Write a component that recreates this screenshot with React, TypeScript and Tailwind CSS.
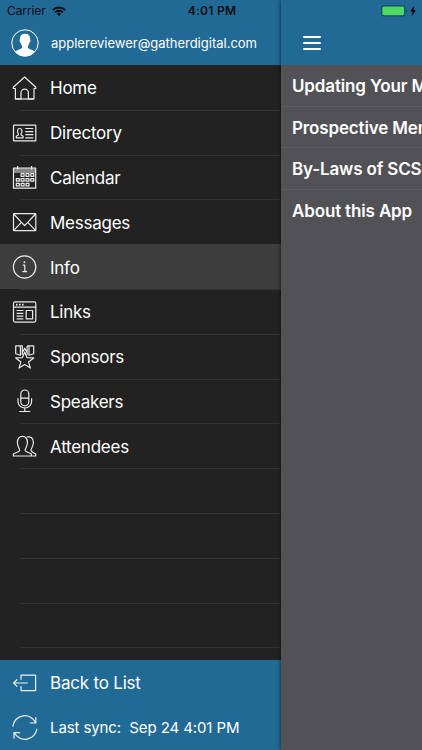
import React from "react";

const icons: Record<string, React.ReactNode> = {
  home: (
    <>
      <path d="M3.3 14.5V13.2L14.6 3l11.2 10.2v1.3H24V25h-5.6v-6.2a3.7 3.7 0 0 0-7.4 0V25H5.4V14.5Z" />
      <path d="M5.4 25H24" />
    </>
  ),
  directory: (
    <>
      <rect x="3.5" y="6.2" width="22.3" height="15.6" rx="0.6" />
      <path d="M6.3 18.8v-1.5l2-1.2v-1.4c-1.6-2.2-.8-5.2 1.4-5.2s3 3 1.4 5.2v1.4l2 1.2v1.5ZM15.3 9.5h8M15.3 12.6h8M15.3 15.7h8M15.3 18.8h8" />
    </>
  ),
  calendar: (
    <>
      <path d="M3.5 5.2h22.2v20H3.5ZM3.5 9h22.2M3.5 7h22.2" />
      <path d="M7.6 3v3.5M21.6 3v3.5" />
      <path
        strokeWidth="1.2"
        d="M11.1 10.7h3v2.6h-3ZM16 10.7h3v2.6h-3ZM20.8 10.7h3v2.6h-3ZM6.3 15.6h3v2.6h-3ZM11.1 15.6h3v2.6h-3ZM16 15.6h3v2.6h-3ZM20.8 15.6h3v2.6h-3ZM6.3 20.3h3v2.6h-3ZM11.1 20.3h3v2.6h-3ZM16 20.3h3v2.6h-3Z"
      />
    </>
  ),
  messages: (
    <>
      <rect x="3.5" y="5.6" width="22.3" height="17" rx="0.6" />
      <path d="m3.8 6 7.6 8.3L14.6 17.5l3.2-3.2L25.5 6M3.8 22.3l7.6-8M25.5 22.3l-7.7-8" />
    </>
  ),
  info: (
    <>
      <circle cx="14.6" cy="14" r="11.2" />
      <path d="M12.8 12.2h2v6.4M12.5 18.6h4.6" />
      <circle cx="14.4" cy="9.2" r="0.9" fill="currentColor" stroke="none" />
    </>
  ),
  links: (
    <>
      <rect x="3.5" y="3.9" width="22.3" height="20.2" rx="1.5" />
      <path d="M3.5 9.2h22.3M6.6 12.5h6.8M6.6 15.3h6.8M6.6 18.1h6.8M6.6 20.9h6.8M16.2 12.5h6.4v8.4h-6.4Z" />
      <path strokeWidth="1.6" d="M6 6.6h1.6M9 6.6h1.6M12 6.6h1.6" />
    </>
  ),
  sponsors: (
    <>
      <path d="m14.7 9 2.3 5.6 6.7.3-5.2 4 1.9 6.2-5.7-3.5L9 25.1l1.9-6.2-5.2-4 6.7-.3Z" />
      <path d="M5.7 2.9h4.7v9.3l-4.7-1.5ZM19 2.9h4.7v7.8L19 12.2ZM10.4 2.9h1.9v9M17.1 2.9H19M17.1 2.9v9M12.3 9.6l2.4-4.4 2.4 4.4" />
    </>
  ),
  speakers: (
    <>
      <rect x="10.8" y="3" width="8" height="15.8" rx="4" />
      <path d="M10.8 11.2h8M8 11.3v3.3a6.8 6.4 0 0 0 13.6 0v-3.3M14.8 21v3.5M9.3 24.5h11" />
    </>
  ),
  attendees: (
    <>
      <path d="M3.4 24v-2.1c2.6-1.6 6.3-1.8 6.3-3.6 0-2.1-2.3-3-2.3-7.7 0-4.2 2-6.2 5-6.2s5 2 5 6.2c0 4.7-2.3 5.6-2.3 7.7 0 1.8 3.7 2 6.3 3.6V24Z" />
      <path d="M16.8 5c4-.9 6.6 1.2 6.6 5.6s-2.4 5.5-2.4 7.7c0 1.8 2.3 2 4.8 3.6V24h-4.2" />
    </>
  ),
  back: (
    <path d="M11 10.7V6.2h14.6v15.4H11v-4.5M17.8 14H3.6M7.3 10.3 3.6 14l3.7 3.7" />
  ),
  sync: (
    <>
      <path d="M2.8 12.6A12 12 0 0 1 25.8 9M26.9 14.8A12 12 0 0 1 4.2 18.6" />
      <path d="M25.8 3.2V9h-6M4 24.8v-6.2h6.2" />
    </>
  ),
};

const Icon: React.FC<{ name: string }> = ({ name }) => (
  <svg
    viewBox="0 0 28 28"
    className="h-7 w-7 shrink-0 overflow-visible text-white/90"
    fill="none"
    stroke="currentColor"
    strokeWidth="1.2"
    strokeLinejoin="round"
  >
    {icons[name]}
  </svg>
);

const menuItems = [
  { label: "Home", icon: "home" },
  { label: "Directory", icon: "directory" },
  { label: "Calendar", icon: "calendar" },
  { label: "Messages", icon: "messages" },
  { label: "Info", icon: "info" },
  { label: "Links", icon: "links" },
  { label: "Sponsors", icon: "sponsors" },
  { label: "Speakers", icon: "speakers" },
  { label: "Attendees", icon: "attendees" },
];

const activeItem = "Info";

const emptyRows = [0, 1, 2, 3, 4];

const pages = ["Updating Your Member Profile", "Prospective Members", "By-Laws of SCS", "About this App"];

const StatusBar: React.FC = () => (
  <div className="absolute inset-x-0 top-0 z-20 flex h-[22px] items-center pr-[5px] pl-[7px] text-black/90">
    <div className="flex flex-1 items-center gap-1.5">
      <span className="text-[12px] leading-4 tracking-[-0.1px]">Carrier</span>
      <svg viewBox="0 0 14 10" className="h-2.5 w-3.5" fill="none" stroke="currentColor" strokeWidth="2">
        <path d="M.8 4a8.8 8.8 0 0 1 12.4 0M3.1 6.4a5.6 5.6 0 0 1 7.8 0" />
        <path d="M7 10 4.9 7.9a3 3 0 0 1 4.2 0Z" fill="currentColor" stroke="none" />
      </svg>
    </div>
    <span className="text-[12px] leading-4 font-semibold tracking-[0.3px]">4:01 PM</span>
    <div className="flex flex-1 items-center justify-end">
      <svg viewBox="0 0 36 12" className="h-3 w-9">
        <rect x="0.7" y="0.9" width="23" height="10" rx="2" fill="#4cd964" stroke="#134b59" strokeWidth="1.2" />
        <path d="M25 4.3c1.3.5 1.3 2.7 0 3.2Z" fill="#123f58" />
        <path d="M33.4.8 29 6.6h2.7l-1 4.4L35 5.2h-2.7Z" fill="black" />
      </svg>
    </div>
  </div>
);

const Drawer: React.FC = () => (
  <aside className="flex h-full w-[281px] shrink-0 flex-col bg-[#222222]">
    <header className="flex h-[65px] shrink-0 items-end bg-[#226a96] pb-[7.6px] pl-[11px]">
      <svg viewBox="0 0 28 28" className="h-7 w-7 shrink-0">
        <circle cx="14" cy="14" r="13.2" fill="none" stroke="white" strokeWidth="1" />
        <path
          fill="white"
          d="M14 4.7c3.6 0 5.4 2.3 5.1 5.7.7.5.3 2.6-.6 3.2-.3 1.5-.9 2.5-1.5 3.2v2c.6 1.8 4.7 1.8 6.9 4A13 13 0 0 1 4.1 22.8c2.2-2.2 6.3-2.2 6.9-4v-2c-.6-.7-1.2-1.7-1.5-3.2-.9-.6-1.3-2.7-.6-3.2-.3-3.4 1.5-5.7 5.1-5.7Z"
        />
      </svg>
      <span className="ml-3 text-[13px] leading-7">applereviewer@gatherdigital.com</span>
    </header>

    <nav className="min-h-0 flex-1 overflow-hidden">
      {menuItems.map((item, index) => (
        <div
          key={item.label}
          className={`flex h-[44.8px] flex-col pl-2.5 ${item.label === activeItem ? "bg-[#3d3d3d]" : ""}`}
        >
          <div
            className={`ml-2.5 h-px shrink-0 ${index === 0 || item.label === activeItem ? "bg-transparent" : "bg-[#333334]"}`}
          />
          <div className="flex min-h-0 flex-1 items-center">
            <Icon name={item.icon} />
            <span className="ml-3 pt-px text-[17px] leading-7 tracking-[-0.25px]">{item.label}</span>
          </div>
        </div>
      ))}
      {emptyRows.map((row) => (
        <div key={row} className="flex h-[44.8px] items-start pl-5">
          <div className="h-px flex-1 bg-[#333334]" />
        </div>
      ))}
    </nav>

    <footer className="h-[90px] shrink-0 bg-[#226a96]">
      <div className="flex h-[45px] items-center pl-2.5">
        <Icon name="back" />
        <span className="ml-3 text-[17px] leading-7 tracking-[-0.2px]">Back to List</span>
      </div>
      <div className="flex h-[45px] items-center pl-2.5">
        <Icon name="sync" />
        <span className="ml-3 text-[15px] leading-7 tracking-[-0.1px] whitespace-pre">Last sync:  Sep 24 4:01 PM</span>
      </div>
    </footer>
  </aside>
);

const InfoPage: React.FC = () => (
  <main className="z-10 h-full min-w-0 flex-1 overflow-hidden bg-[#525156] shadow-[0_0_4px_rgba(0,0,0,0.7)]">
    <header className="flex h-[65.4px] items-end bg-[#226a96] pb-[15.4px] pl-[22px]">
      <div className="flex w-[18px] flex-col gap-1">
        <div className="h-0.5 rounded-full bg-white" />
        <div className="h-0.5 rounded-full bg-white" />
        <div className="h-0.5 rounded-full bg-white" />
      </div>
    </header>
    {pages.map((page) => (
      <div
        key={page}
        className="flex h-[41.4px] items-center border-b border-[#5d5d62] pt-[3px] pl-[11px] text-[17px] font-semibold tracking-[-0.15px] whitespace-nowrap last:border-transparent"
      >
        {page}
      </div>
    ))}
  </main>
);

const App: React.FC = () => {
  return (
    <div className="relative flex h-[750px] w-[422px] overflow-hidden font-['Inter',sans-serif] text-white">
      <Drawer />
      <InfoPage />
      <StatusBar />
    </div>
  );
};

export default App;
